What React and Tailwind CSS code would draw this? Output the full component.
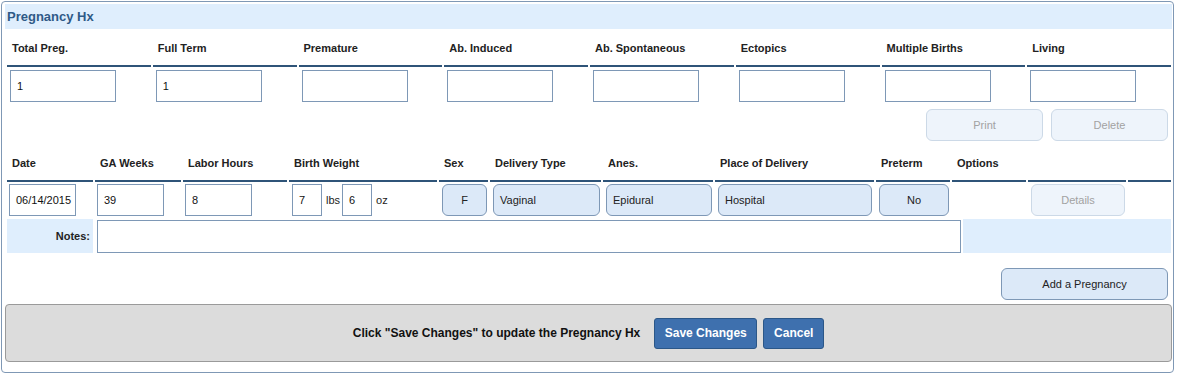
import React from 'react';

const topCols = [
  { label: 'Total Preg.', value: '1' },
  { label: 'Full Term', value: '1' },
  { label: 'Premature', value: '' },
  { label: 'Ab. Induced', value: '' },
  { label: 'Ab. Spontaneous', value: '' },
  { label: 'Ectopics', value: '' },
  { label: 'Multiple Births', value: '' },
  { label: 'Living', value: '' },
];

const rowLabels = ['Date', 'GA Weeks', 'Labor Hours', 'Birth Weight', 'Sex', 'Delivery Type', 'Anes.', 'Place of Delivery', 'Preterm', 'Options', '', ''];

const gridCols = 'grid grid-cols-[86px_86px_104px_148px_49px_111px_110px_159px_74px_74px_98px_1fr] gap-x-[2px]';

function TextBox({ value, className = '' }) {
  return (
    <div className={`h-[32px] border border-[#7e98b6] bg-white flex items-center pl-[6px] text-[11px] text-[#111] ${className}`}>
      {value}
    </div>
  );
}

function PickButton({ children, className = '' }) {
  return (
    <div className={`h-[32px] ml-[3px] rounded-[6px] border border-[#7e98b6] bg-[#dce9f8] flex items-center text-[11px] text-[#222] ${className}`}>
      {children}
    </div>
  );
}

function DisabledButton({ children, className = '' }) {
  return (
    <div className={`h-[32px] rounded-[6px] border border-[#ccd9e7] bg-[#eef4fb] flex items-center justify-center text-[11px] text-[#a2a2a2] ${className}`}>
      {children}
    </div>
  );
}

export default function App() {
  return (
    <div className="bg-white w-[1177px] h-[376px] pt-[1px]" style={{ fontFamily: '"Liberation Sans", Arial, sans-serif' }}>
      <div className="ml-[1px] w-[1173px] h-[372px] border border-[#7f98b5] rounded-[4px] pt-[2px]">

        {/* Title bar */}
        <div className="ml-[3px] mr-[1px] h-[25px] bg-[#dfeefd] flex items-center pl-[2px] text-[13px] font-bold text-[#2f5a87]">
          Pregnancy Hx
        </div>

        {/* Totals */}
        <div className="ml-[5px] mr-[2px] grid grid-cols-8 gap-x-[2px]">
          {topCols.map((c) => (
            <div key={c.label}>
              <div className="h-[38px] border-b-2 border-[#2f5478] pt-[12px] pl-[5px] text-[11px] leading-[14px] font-bold text-[#222]">
                {c.label}
              </div>
              <TextBox value={c.value} className="mt-[3px] ml-[3px] w-[106px]" />
            </div>
          ))}
        </div>

        <div className="ml-[5px] mr-[2px] mt-[7px] flex justify-end gap-[8px] pr-[3px]">
          <DisabledButton className="w-[117px]">Print</DisabledButton>
          <DisabledButton className="w-[117px]">Delete</DisabledButton>
        </div>

        {/* Pregnancy rows */}
        <div className={`ml-[5px] mr-[2px] ${gridCols}`}>
          {rowLabels.map((l, i) => (
            <div key={i} className="h-[41px] border-b-2 border-[#2f5478] pt-[15px] pl-[5px] text-[11px] leading-[14px] font-bold text-[#222]">
              {l}
            </div>
          ))}
        </div>

        <div className={`ml-[5px] mr-[2px] mt-[2px] ${gridCols}`}>
          <TextBox value="06/14/2015" className="ml-[2px] w-[67px]" />
          <TextBox value="39" className="ml-[2px] w-[67px]" />
          <TextBox value="8" className="ml-[2px] w-[67px]" />
          <div className="flex items-center text-[11px] text-[#222]">
            <TextBox value="7" className="ml-[3px] w-[30px]" />
            <span className="ml-[4px]">lbs</span>
            <TextBox value="6" className="ml-[2px] w-[30px]" />
            <span className="ml-[4px]">oz</span>
          </div>
          <PickButton className="w-[45px] justify-center">F</PickButton>
          <PickButton className="w-[107px] pl-[6px]">Vaginal</PickButton>
          <PickButton className="w-[106px] pl-[6px]">Epidural</PickButton>
          <PickButton className="w-[154px] pl-[6px]">Hospital</PickButton>
          <PickButton className="w-[70px] justify-center">No</PickButton>
          <div></div>
          <DisabledButton className="ml-[3px] w-[94px]">Details</DisabledButton>
          <div></div>
        </div>

        {/* Notes */}
        <div className="ml-[5px] mr-[2px] mt-[3px] h-[34px] flex gap-x-[2px]">
          <div className="w-[86px] bg-[#dfeefd] flex items-center justify-end pr-[3px] text-[11px] font-bold text-[#222]">
            Notes:
          </div>
          <div className="w-[866px] pt-[1px] pl-[2px]">
            <div className="h-[33px] border border-[#7e98b6] bg-white"></div>
          </div>
          <div className="flex-1 bg-[#dfeefd]"></div>
        </div>

        <div className="ml-[5px] mr-[2px] mt-[15px] flex justify-end pr-[3px]">
          <div className="w-[167px] h-[32px] rounded-[6px] border border-[#7e98b6] bg-[#dce9f8] flex items-center justify-center text-[11px] text-[#222]">
            Add a Pregnancy
          </div>
        </div>

        {/* Save bar */}
        <div className="ml-[3px] mr-[1px] mt-[4px] h-[58px] rounded-[4px] border border-[#9a9a9a] bg-[#dcdcdc] flex items-center justify-center">
          <span className="text-[12px] font-bold text-[#111] mr-[14px]">
            Click "Save Changes" to update the Pregnancy Hx
          </span>
          <div className="h-[31px] w-[103px] rounded-[3px] border border-[#2b5788] bg-[#3e70ae] flex items-center justify-center text-[12px] font-bold text-white">
            Save Changes
          </div>
          <div className="ml-[6px] h-[31px] w-[61px] rounded-[3px] border border-[#2b5788] bg-[#3e70ae] flex items-center justify-center text-[12px] font-bold text-white">
            Cancel
          </div>
        </div>
      </div>
    </div>
  );
}
